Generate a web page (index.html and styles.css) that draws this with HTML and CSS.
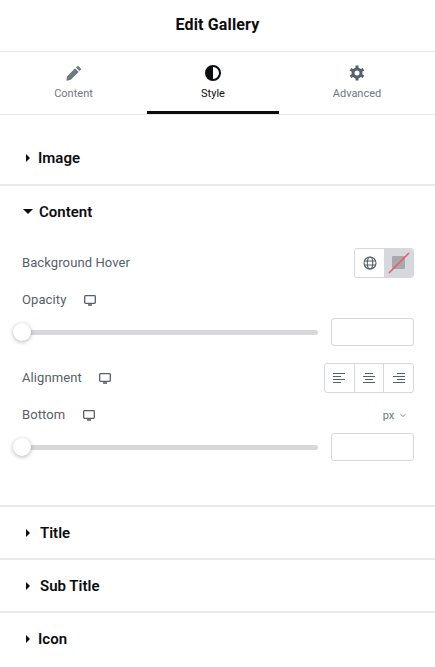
FILE: index.html
```html
<!DOCTYPE html>
<html lang="en">
<head>
    <meta charset="UTF-8">
    <meta name="viewport" content="width=device-width, initial-scale=1.0">
    <title>Edit Gallery</title>
    <link rel="stylesheet" href="styles.css">
</head>
<body>
    <div class="panel">
        <div class="panel-title">Edit Gallery</div>
        <div class="tabs">
            <div class="tab tab-content">
                <svg class="tab-icon" viewBox="0 0 16 16"><path d="M11.200 1.200a1 1 0 0 1 1.400 0l2.200 2.200a1 1 0 0 1 0 1.400l-1.300 1.300-3.600-3.600zM9.100 3.300l3.600 3.600-7.900 7.900-4 .9-.5-.5.9-4z"/></svg>
                <span>Content</span>
            </div>
            <div class="tab tab-style active">
                <svg class="tab-icon" viewBox="0 0 16 16"><path fill-rule="evenodd" d="M8 0a8 8 0 1 1 0 16A8 8 0 0 1 8 0zm0 2v12a6 6 0 0 0 0-12z"/></svg>
                <span>Style</span>
            </div>
            <div class="tab tab-advanced">
                <svg class="tab-icon" viewBox="0 0 16 16"><path class="gear-teeth" d="M8 .5v15M1.500 4.250l13 7.500M14.500 4.250l-13 7.500"/><circle cx="8" cy="8" r="5.500"/><circle class="gear-hole" cx="8" cy="8" r="2.500"/></svg>
                <span>Advanced</span>
            </div>
        </div>

        <div class="section section-first">
            <div class="section-head"><i class="arrow-right"></i>Image</div>
        </div>

        <div class="section section-open">
            <div class="section-head"><i class="arrow-down"></i>Content</div>

            <div class="row row-hover">
                <label>Background Hover</label>
                <div class="btn-group">
                    <div class="btn-cell btn-globe">
                        <svg width="14" height="14" viewBox="0 0 14 14" fill="none" stroke="#556068" stroke-width="1.100"><circle cx="7" cy="7" r="6"/><ellipse cx="7" cy="7" rx="2.700" ry="6"/><path d="M1.200 5h11.600M1.200 9h11.600"/></svg>
                    </div>
                    <div class="btn-cell btn-none">
                        <svg width="22" height="22" viewBox="0 0 22 22"><rect x="4" y="4" width="13" height="13" rx="1" fill="#a8a9ac"/><path d="M1 21L21 1" stroke="#ee5a60" stroke-width="1.500"/></svg>
                    </div>
                </div>
            </div>

            <div class="row row-label">
                <label>Opacity</label>
                <svg class="device" viewBox="0 0 12 11"><path d="M1.500 .7h9a.8.8 0 0 1 .8.8v6a.8.8 0 0 1-.8.8h-9a.8.8 0 0 1-.8-.8v-6a.8.8 0 0 1 .8-.8z" fill="none" stroke="#556068" stroke-width="1.300"/><path d="M4 10h4" stroke="#556068" stroke-width="1.600"/></svg>
            </div>
            <div class="slider-row">
                <div class="slider"><div class="knob"></div></div>
                <div class="num-input"></div>
            </div>

            <div class="row row-align">
                <label>Alignment</label>
                <svg class="device device-align" viewBox="0 0 12 11"><path d="M1.500 .7h9a.8.8 0 0 1 .8.8v6a.8.8 0 0 1-.8.8h-9a.8.8 0 0 1-.8-.8v-6a.8.8 0 0 1 .8-.8z" fill="none" stroke="#556068" stroke-width="1.300"/><path d="M4 10h4" stroke="#556068" stroke-width="1.600"/></svg>
                <div class="btn-group align-group">
                    <div class="align-cell"><svg width="12" height="10" viewBox="0 0 12 10" stroke="#556068"><path d="M0 .5h12M0 3.500h8M0 6.500h12M0 9.500h8"/></svg></div>
                    <div class="align-cell"><svg width="12" height="10" viewBox="0 0 12 10" stroke="#556068"><path d="M2 .5h8M0 3.500h12M2 6.500h8M0 9.500h12"/></svg></div>
                    <div class="align-cell"><svg width="12" height="10" viewBox="0 0 12 10" stroke="#556068"><path d="M4 .5h8M0 3.500h12M4 6.500h8M0 9.500h12"/></svg></div>
                </div>
            </div>

            <div class="row row-label">
                <label>Bottom</label>
                <svg class="device" viewBox="0 0 12 11"><path d="M1.500 .7h9a.8.8 0 0 1 .8.8v6a.8.8 0 0 1-.8.8h-9a.8.8 0 0 1-.8-.8v-6a.8.8 0 0 1 .8-.8z" fill="none" stroke="#556068" stroke-width="1.300"/><path d="M4 10h4" stroke="#556068" stroke-width="1.600"/></svg>
                <div class="unit">px <svg width="6" height="5" viewBox="0 0 7 5" fill="none" stroke="#6f767c"><path d="M.5 1l3 2.700 3-2.700"/></svg></div>
            </div>
            <div class="slider-row">
                <div class="slider"><div class="knob"></div></div>
                <div class="num-input"></div>
            </div>
        </div>

        <div class="section">
            <div class="section-head head-wide"><i class="arrow-right"></i>Title</div>
        </div>
        <div class="section">
            <div class="section-head head-wide"><i class="arrow-right"></i>Sub Title</div>
        </div>
        <div class="section section-last">
            <div class="section-head head-icon"><i class="arrow-right"></i>Icon</div>
        </div>
    </div>
</body>
</html>
```
FILE: styles.css
```css
html, body {
    margin: 0;
    height: 100%;
    overflow: hidden;
}
body {
    font-family: Roboto, "Liberation Sans", sans-serif;
    background: #fff;
    color: #0c0d0e;
}
.panel {
    width: 435px;
}
.panel-title {
    height: 51px;
    line-height: 49px;
    text-align: center;
    font-size: 16px;
    font-weight: 700;
    letter-spacing: 0.15px;
    border-bottom: 1px solid #e6e8ea;
}
.tabs {
    display: grid;
    grid-template-columns: 147px 132px 156px;
    height: 62px;
    border-bottom: 1px solid #e6e8ea;
}
.tab {
    display: flex;
    flex-direction: column;
    align-items: center;
    height: 62px;
    box-sizing: border-box;
    padding-top: 13px;
    font-size: 11px;
    color: #6d7882;
}
.tab span {
    margin-top: 6px;
    line-height: 14px;
}
.tab-icon {
    width: 16px;
    height: 16px;
    fill: #556068;
}
.tab-content .tab-icon {
    fill: #6d7882;
}
.gear-teeth {
    stroke: #556068;
    stroke-width: 3;
}
.gear-hole {
    fill: #fff;
}
.tab.active {
    color: #0c0d0e;
    border-bottom: 3px solid #0c0d0e;
}
.tab.active .tab-icon {
    fill: #0c0d0e;
}
.section {
    border-top: 2px solid #e9e9e9;
}
.section-first {
    border-top: 0;
    height: 69px;
    padding-top: 20px;
    box-sizing: border-box;
}
.section-head {
    display: flex;
    align-items: center;
    height: 51px;
    padding-left: 26px;
    font-size: 15px;
    font-weight: 600;
    color: #0c0d0e;
}
.section-first .section-head {
    height: 46px;
}
.section-last {
    height: 60px;
}
.arrow-right {
    width: 0;
    height: 0;
    margin-right: 9px;
    border-left: 4px solid #0c0d0e;
    border-top: 4px solid transparent;
    border-bottom: 4px solid transparent;
}
.section-first .arrow-right,
.head-icon .arrow-right {
    margin-right: 8px;
}
.head-wide .arrow-right {
    margin-right: 10px;
}
.arrow-down {
    width: 0;
    height: 0;
    margin-left: -3px;
    margin-right: 6px;
    border-top: 5px solid #0c0d0e;
    border-left: 5px solid transparent;
    border-right: 5px solid transparent;
}
.section-open {
    height: 321px;
    box-sizing: border-box;
}
.row {
    display: flex;
    align-items: center;
    padding: 0 21px 0 22px;
    font-size: 13px;
    color: #556068;
    height: 30px;
}
.row label {
    line-height: 16px;
    letter-spacing: 0.1px;
}
.row-hover {
    justify-content: space-between;
    margin-top: 11px;
}
.row-label {
    margin-top: 7px;
}
.device {
    width: 12px;
    height: 11px;
    margin-left: 18px;
}
.device-align {
    margin-left: 17px;
    margin-right: auto;
}
.btn-group {
    display: flex;
    width: 60px;
    height: 30px;
    box-sizing: border-box;
    border: 1px solid #d5d8dc;
    border-radius: 3px;
    overflow: hidden;
}
.btn-cell {
    flex: 1;
    display: flex;
    align-items: center;
    justify-content: center;
}
.btn-none {
    background: #d5d8dc;
}
.align-group {
    width: 90px;
}
.align-cell {
    flex: 1;
    display: flex;
    align-items: center;
    justify-content: center;
    border-left: 1px solid #d5d8dc;
}
.align-cell:first-child {
    border-left: 0;
}
.slider-row {
    display: flex;
    align-items: center;
    justify-content: space-between;
    padding: 0 21px 0 22px;
    height: 28px;
    margin-top: 3px;
}
.slider {
    position: relative;
    width: 296px;
    height: 5px;
    border-radius: 3px;
    background: #d5d8dc;
}
.knob {
    position: absolute;
    left: -9px;
    top: -7px;
    width: 18px;
    height: 18px;
    border-radius: 50%;
    background: #fff;
    box-shadow: 0 1px 4px rgba(0, 0, 0, 0.3);
}
.num-input {
    width: 83px;
    height: 28px;
    box-sizing: border-box;
    border: 1px solid #d5d8dc;
    border-radius: 3px;
}
.row-align {
    margin-top: 17px;
}
.unit {
    margin-left: auto;
    margin-right: 8px;
    font-size: 11px;
    color: #6f767c;
}
.unit svg {
    margin-left: 3px;
    vertical-align: 1px;
}
```
